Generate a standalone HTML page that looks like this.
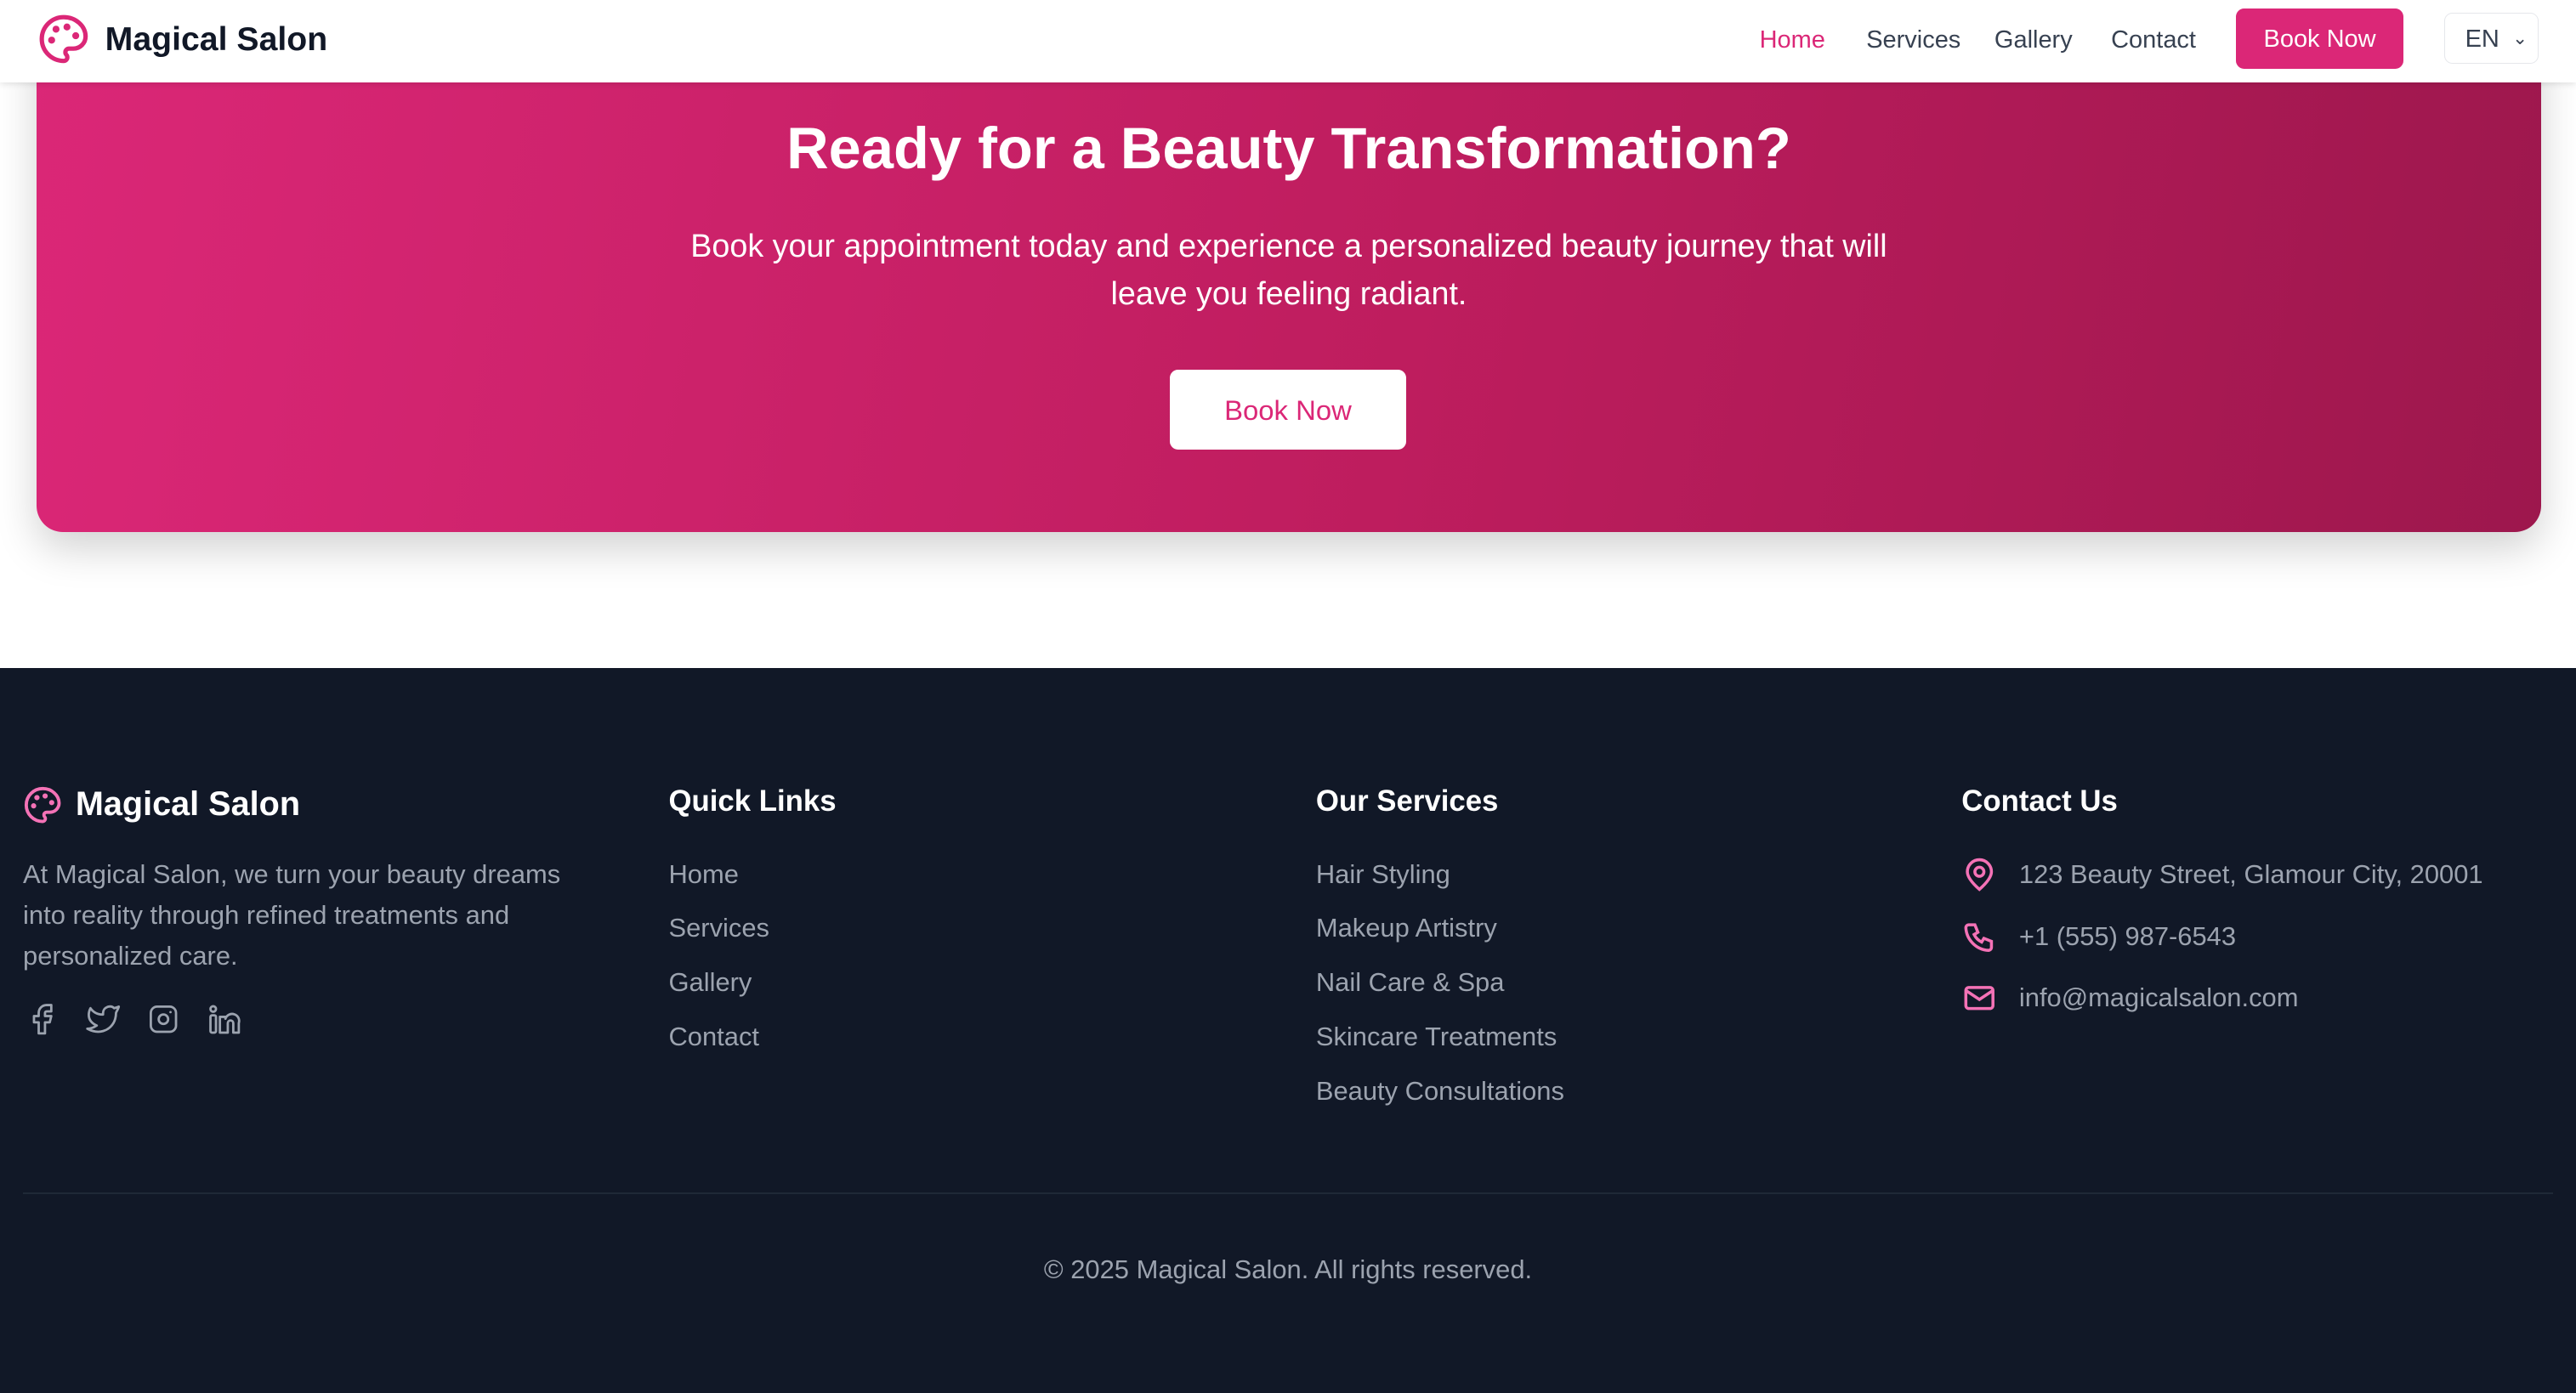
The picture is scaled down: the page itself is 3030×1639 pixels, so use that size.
<!DOCTYPE html>
<html><head><meta charset="utf-8"><style>
html,body{margin:0;padding:0;}
body{width:1568px;height:848px;zoom:1.9324;font-family:"Liberation Sans",sans-serif;background:#fff;position:relative;overflow:hidden;}
.nav{position:absolute;left:0;top:0;width:1568px;height:50px;background:#fff;box-shadow:0 1px 4px rgba(0,0,0,.12);z-index:5;}
.logo{position:absolute;left:23px;top:8px;display:flex;align-items:center;gap:9px;font-weight:bold;font-size:20.3px;color:#111827;}
.links{position:absolute;top:16px;font-size:15px;color:#374151;}
.bn{position:absolute;left:1361px;top:5px;width:102px;height:37px;background:#db2777;border-radius:5px;color:#fff;font-size:15px;text-align:center;line-height:38px;}
.lang{position:absolute;left:1488px;top:8px;width:57px;height:31px;border:1px solid #e5e7eb;border-radius:5px;font-size:15px;color:#374151;line-height:32px;box-sizing:border-box;padding-left:12px;}
.banner{position:absolute;left:22px;top:10px;width:1525px;height:314px;border-radius:16px;background:linear-gradient(100deg,#db2777 0%,#be1d5e 55%,#9d174d 100%);box-shadow:0 10px 25px rgba(0,0,0,.18);}
.banner h1{position:absolute;left:0;right:0;top:60px;margin:0;text-align:center;color:#fff;font-size:35.5px;font-weight:bold;}
.banner p{position:absolute;left:380px;right:380px;top:125px;margin:0;text-align:center;color:#fff;font-size:19.5px;line-height:29px;}
.bb{position:absolute;left:690px;top:215px;width:144px;height:49px;background:#fff;border-radius:5px;color:#db2777;font-size:17px;text-align:center;line-height:50px;}
.foot{position:absolute;left:0;top:407px;width:1568px;height:441px;background:#111827;}
.col{position:absolute;top:71px;}
.col h3{margin:0 0 21px;color:#fff;font-size:18px;font-weight:bold;height:24px;}
.col .l{color:#9ca3af;font-size:16px;height:33px;}
.ci{display:flex;align-items:center;gap:13px;color:#9ca3af;font-size:16px;height:37.5px;}
</style></head><body>
<div class="nav">
 <div class="logo"><svg width="32" height="32" viewBox="0 0 24 24" fill="none" stroke="#db2777" stroke-width="2" stroke-linecap="round" stroke-linejoin="round"><circle cx="13.5" cy="6.5" r=".6" fill="#db2777"/><circle cx="17.5" cy="10.5" r=".6" fill="#db2777"/><circle cx="8.5" cy="7.5" r=".6" fill="#db2777"/><circle cx="6.5" cy="12.5" r=".6" fill="#db2777"/><path d="M12 2C6.5 2 2 6.5 2 12s4.5 10 10 10c.93 0 1.65-.75 1.65-1.69 0-.44-.18-.84-.44-1.13-.29-.29-.44-.65-.44-1.13a1.64 1.64 0 0 1 1.67-1.67h2c3.05 0 5.56-2.5 5.56-5.550C21.97 6.01 17.46 2 12 2z"/></svg>Magical Salon</div>
 <span class="links" style="left:1071px;color:#db2777">Home</span>
 <span class="links" style="left:1136px">Services</span>
 <span class="links" style="left:1214px">Gallery</span>
 <span class="links" style="left:1285px">Contact</span>
 <div class="bn">Book Now</div>
 <div class="lang">EN <span style="position:absolute;right:6px;top:-1px;font-size:11px">&#8964;</span></div>
</div>
<div class="banner">
 <h1>Ready for a Beauty Transformation?</h1>
 <p>Book your appointment today and experience a personalized beauty journey that will leave you feeling radiant.</p>
 <div class="bb">Book Now</div>
</div>
<div class="foot">
 <div class="col" style="left:14px;width:350px">
  <h3 style="display:flex;align-items:center;gap:8px;font-size:20.5px"><svg width="24" height="24" viewBox="0 0 24 24" fill="none" stroke="#f472b6" stroke-width="2" stroke-linecap="round" stroke-linejoin="round"><circle cx="13.5" cy="6.5" r=".6" fill="#f472b6"/><circle cx="17.5" cy="10.5" r=".6" fill="#f472b6"/><circle cx="8.5" cy="7.5" r=".6" fill="#f472b6"/><circle cx="6.5" cy="12.5" r=".6" fill="#f472b6"/><path d="M12 2C6.5 2 2 6.5 2 12s4.5 10 10 10c.93 0 1.65-.75 1.65-1.69 0-.44-.18-.84-.44-1.13-.29-.29-.44-.65-.44-1.13a1.64 1.64 0 0 1 1.67-1.670h2c3.05 0 5.56-2.5 5.56-5.55C21.97 6.01 17.46 2 12 2z"/></svg>Magical Salon</h3>
  <div style="color:#9ca3af;font-size:16px;line-height:25px;margin-top:-3px">At Magical Salon, we turn your beauty dreams into reality through refined treatments and personalized care.</div>
  <div style="display:flex;gap:14px;margin-top:14px">
   <svg width="23" height="23" viewBox="0 0 24 24" fill="none" stroke="#9ca3af" stroke-width="1.5" stroke-linecap="round" stroke-linejoin="round"><path d="M7 10v4h3v7h4v-7h3l1-4h-4V8a1 1 0 0 1 1-1h3V3h-3a5 5 0 0 0-5 5v2H7"/></svg>
   <svg width="23" height="23" viewBox="0 0 24 24" fill="none" stroke="#9ca3af" stroke-width="1.5" stroke-linecap="round" stroke-linejoin="round"><path d="M22 4.01c-1 .49-1.98.69-3 .99-1.12-1.26-2.78-1.33-4.38-.73S12 6.38 12 8.01v1c-3.25.08-6.14-1.4-8-4 0 0-4.19 7.45 4 11-1.87 1.250-3.74 2.09-6 2 3.31 1.8 6.92 2.42 10.05 1.51 3.59-1.04 6.54-3.73 7.67-7.75.34-1.22.5-2.49.5-3.76 0-.25 1.51-2.77 1.78-4.01z"/></svg>
   <svg width="23" height="23" viewBox="0 0 24 24" fill="none" stroke="#9ca3af" stroke-width="1.5" stroke-linecap="round" stroke-linejoin="round"><rect x="4" y="4" width="16" height="16" rx="4"/><circle cx="12" cy="12" r="3"/><path d="M16.5 7.5v.01"/></svg>
   <svg width="23" height="23" viewBox="0 0 24 24" fill="none" stroke="#9ca3af" stroke-width="1.5" stroke-linecap="round" stroke-linejoin="round"><rect x="3" y="9.5" width="3.5" height="11" rx="1"/><circle cx="4.75" cy="5.5" r="1.75"/><path d="M9 20.5V10.5h3.5v1.2a4 4 0 0 1 8.5 2.8v6h-3.5v-6a1.75 1.75 0 0 0-3.5 0v6z"/></svg>
  </div>
 </div>
 <div class="col" style="left:407px"><h3>Quick Links</h3><div class="l">Home</div><div class="l">Services</div><div class="l">Gallery</div><div class="l">Contact</div></div>
 <div class="col" style="left:801px"><h3>Our Services</h3><div class="l">Hair Styling</div><div class="l">Makeup Artistry</div><div class="l">Nail Care &amp; Spa</div><div class="l">Skincare Treatments</div><div class="l">Beauty Consultations</div></div>
 <div class="col" style="left:1194px"><h3>Contact Us</h3>
  <div class="ci" style="margin-top:-9px"><svg width="22" height="22" viewBox="0 0 24 24" fill="none" stroke="#f472b6" stroke-width="2"><circle cx="12" cy="10" r="3"/><path d="M12 21.7C17.3 17 20 13 20 10a8 8 0 1 0-16 0c0 3 2.7 7 8 11.7z"/></svg>123 Beauty Street, Glamour City, 20001</div>
  <div class="ci"><svg width="22" height="22" viewBox="0 0 24 24" fill="none" stroke="#f472b6" stroke-width="2"><path d="M5 4h4l2 5-2.5 1.5a11 11 0 0 0 5 5L15 13l5 2v4a2 2 0 0 1-2 2A16 16 0 0 1 3 6a2 2 0 0 1 2-2"/></svg>+1 (555) 987-6543</div>
  <div class="ci"><svg width="22" height="22" viewBox="0 0 24 24" fill="none" stroke="#f472b6" stroke-width="2"><rect x="3" y="5" width="18" height="14" rx="2"/><path d="M3 7l9 6 9-6"/></svg>info@magicalsalon.com</div>
 </div>
 <div style="position:absolute;left:14px;right:14px;top:319px;height:1px;background:#1f2937"></div>
 <div style="position:absolute;left:0;right:0;top:357px;text-align:center;color:#9ca3af;font-size:16px">© 2025 Magical Salon. All rights reserved.</div>
</div>
</body></html>
